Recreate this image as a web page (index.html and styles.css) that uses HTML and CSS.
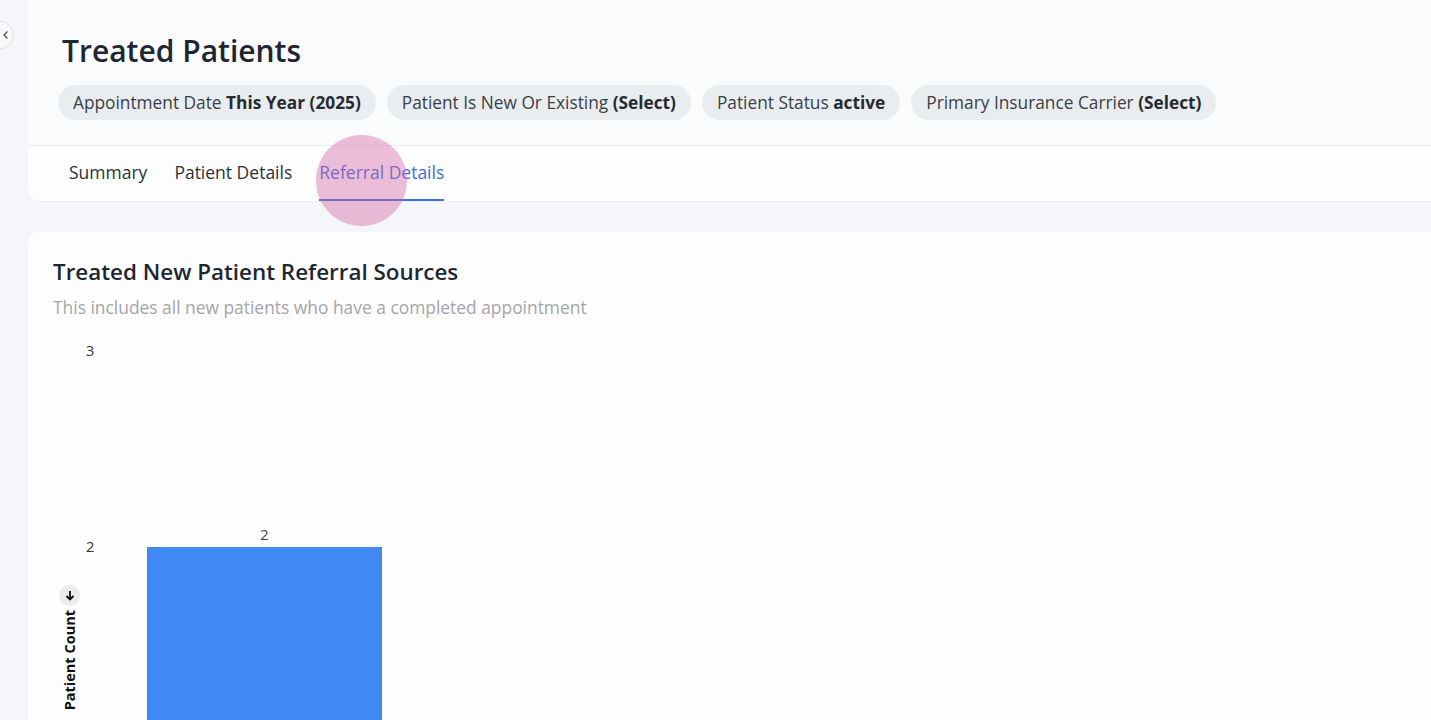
FILE: index.html
```html
<!DOCTYPE html>
<html lang="en">

<head>
    <meta charset="UTF-8" />
    <meta name="viewport" content="width=device-width, initial-scale=1.0" />
    <title>Treated Patients</title>
    <link rel="stylesheet" href="styles.css">
</head>

<body>
    <div class="page">
        <div class="rail">
            <button class="collapse" aria-label="Collapse">
                <svg width="10" height="10" viewBox="0 0 10 10"><path d="M6.5 1.5 L3 5 L6.5 8.5" fill="none" stroke="#555" stroke-width="1.4"/></svg>
            </button>
        </div>

        <div class="main">
            <div class="header-card">
                <div class="header-top">
                    <h1 class="title">Treated Patients</h1>
                    <div class="chips">
                        <span class="chip">Appointment Date <b>This Year (2025)</b></span>
                        <span class="chip">Patient Is New Or Existing <b>(Select)</b></span>
                        <span class="chip">Patient Status <b>active</b></span>
                        <span class="chip">Primary Insurance Carrier <b>(Select)</b></span>
                    </div>
                </div>
                <div class="tabs">
                    <span class="tab">Summary</span>
                    <span class="tab">Patient Details</span>
                    <span class="tab active">Referral Details</span>
                </div>
                <div class="click-dot"></div>
            </div>

            <div class="chart-card">
                <h2 class="chart-title">Treated New Patient Referral Sources</h2>
                <p class="chart-sub">This includes all new patients who have a completed appointment</p>

                <div class="chart">
                    <div class="y-label">
                        <span class="sort-btn">
                            <svg width="10" height="11" viewBox="0 0 10 11"><path d="M5 1 V9.5 M1.5 6 L5 9.5 L8.5 6" fill="none" stroke="#111" stroke-width="1.8"/></svg>
                        </span>
                        <span class="y-text">Patient Count</span>
                    </div>
                    <div class="y-ticks">
                        <span>3</span>
                        <span>2</span>
                        <span>1</span>
                        <span>0</span>
                    </div>
                    <div class="plot">
                        <div class="bar-col">
                            <span class="bar-value">2</span>
                            <div class="bar" style="height: 392px"></div>
                        </div>
                    </div>
                </div>
            </div>
        </div>
    </div>
</body>

</html>
```

FILE: styles.css
```css
body {
    font-family: "Open Sans", Arial, sans-serif;
    margin: 0;
    padding: 0;
    background: #f4f6f9;
    color: #1f2733;
    height: 720px;
    overflow: hidden;
}

.page {
    display: flex;
}

.rail {
    width: 28px;
    flex-shrink: 0;
    position: relative;
}

.collapse {
    position: absolute;
    left: -14px;
    top: 21px;
    width: 28px;
    height: 28px;
    border-radius: 50%;
    border: 1px solid #dcdfe3;
    background: #f7f8fa;
    padding: 0 0 0 12px;
    display: flex;
    align-items: center;
    justify-content: center;
}

.main {
    flex: 1;
    display: flex;
    flex-direction: column;
    gap: 31px;
}

.header-card {
    background: #fdfdfe;
    border-radius: 0 0 0 10px;
    position: relative;
    box-shadow: 0 1px 0 #edf0f3;
}

.header-top {
    background: #fafbfc;
    padding: 31px 0 25px 30px;
    border-bottom: 1px solid #eaecef;
}

.title {
    margin: 0 0 14px 4px;
    font-size: 30px;
    line-height: 40px;
    font-weight: 600;
    color: #1e2632;
}

.chips {
    display: flex;
    gap: 11px;
}

.chip {
    background: #e9edf0;
    border-radius: 18px;
    padding: 6px 15px;
    font-size: 17.3px;
    line-height: 23px;
    color: #3a4048;
}

.chip b {
    font-weight: 700;
    color: #262b31;
}

.tabs {
    display: flex;
    gap: 27px;
    padding-left: 41px;
    height: 55px;
}

.tab {
    display: flex;
    align-items: center;
    font-size: 17.5px;
    color: #2c323a;
    border-bottom: 2px solid transparent;
    padding-bottom: 1px;
}

.tab.active {
    color: #3a6fd8;
    border-bottom-color: #3a72d9;
}

.click-dot {
    position: absolute;
    left: 288px;
    top: 135px;
    width: 91px;
    height: 91px;
    border-radius: 50%;
    background: rgba(212, 100, 165, 0.42);
    pointer-events: none;
}

.chart-card {
    background: #fdfdfd;
    border-radius: 10px 0 0 0;
    padding: 25px 0 0 25px;
    flex: 1;
}

.chart-title {
    margin: 0;
    font-size: 22.4px;
    line-height: 30px;
    font-weight: 600;
    color: #1f2630;
}

.chart-sub {
    margin: 8px 0 0;
    font-size: 17.4px;
    line-height: 24px;
    color: #a4a6a9;
}

.chart {
    display: flex;
    margin-top: 22px;
}

.y-label {
    width: 33px;
    height: 608px;
    display: flex;
    flex-direction: column;
    align-items: center;
    justify-content: center;
    gap: 4px;
    padding-top: 5px;
    box-sizing: border-box;
}

.sort-btn {
    width: 21px;
    height: 21px;
    border-radius: 50%;
    background: #ececee;
    display: flex;
    align-items: center;
    justify-content: center;
}

.y-text {
    writing-mode: vertical-rl;
    transform: rotate(180deg);
    font-size: 14.5px;
    font-weight: 700;
    color: #111;
    line-height: 18px;
}

.y-ticks {
    width: 22px;
    height: 608px;
    display: flex;
    flex-direction: column;
    justify-content: space-between;
    font-size: 14.5px;
    line-height: 20px;
    color: #333;
}

.plot {
    padding-top: 10px;
    height: 588px;
    display: flex;
    align-items: flex-end;
}

.bar-col {
    margin-left: 39px;
    width: 235px;
    display: flex;
    flex-direction: column;
    align-items: center;
}

.bar-value {
    font-size: 14.5px;
    line-height: 20px;
    color: #444;
    margin-bottom: 2px;
}

.bar {
    width: 100%;
    background: #4189f2;
}
```
